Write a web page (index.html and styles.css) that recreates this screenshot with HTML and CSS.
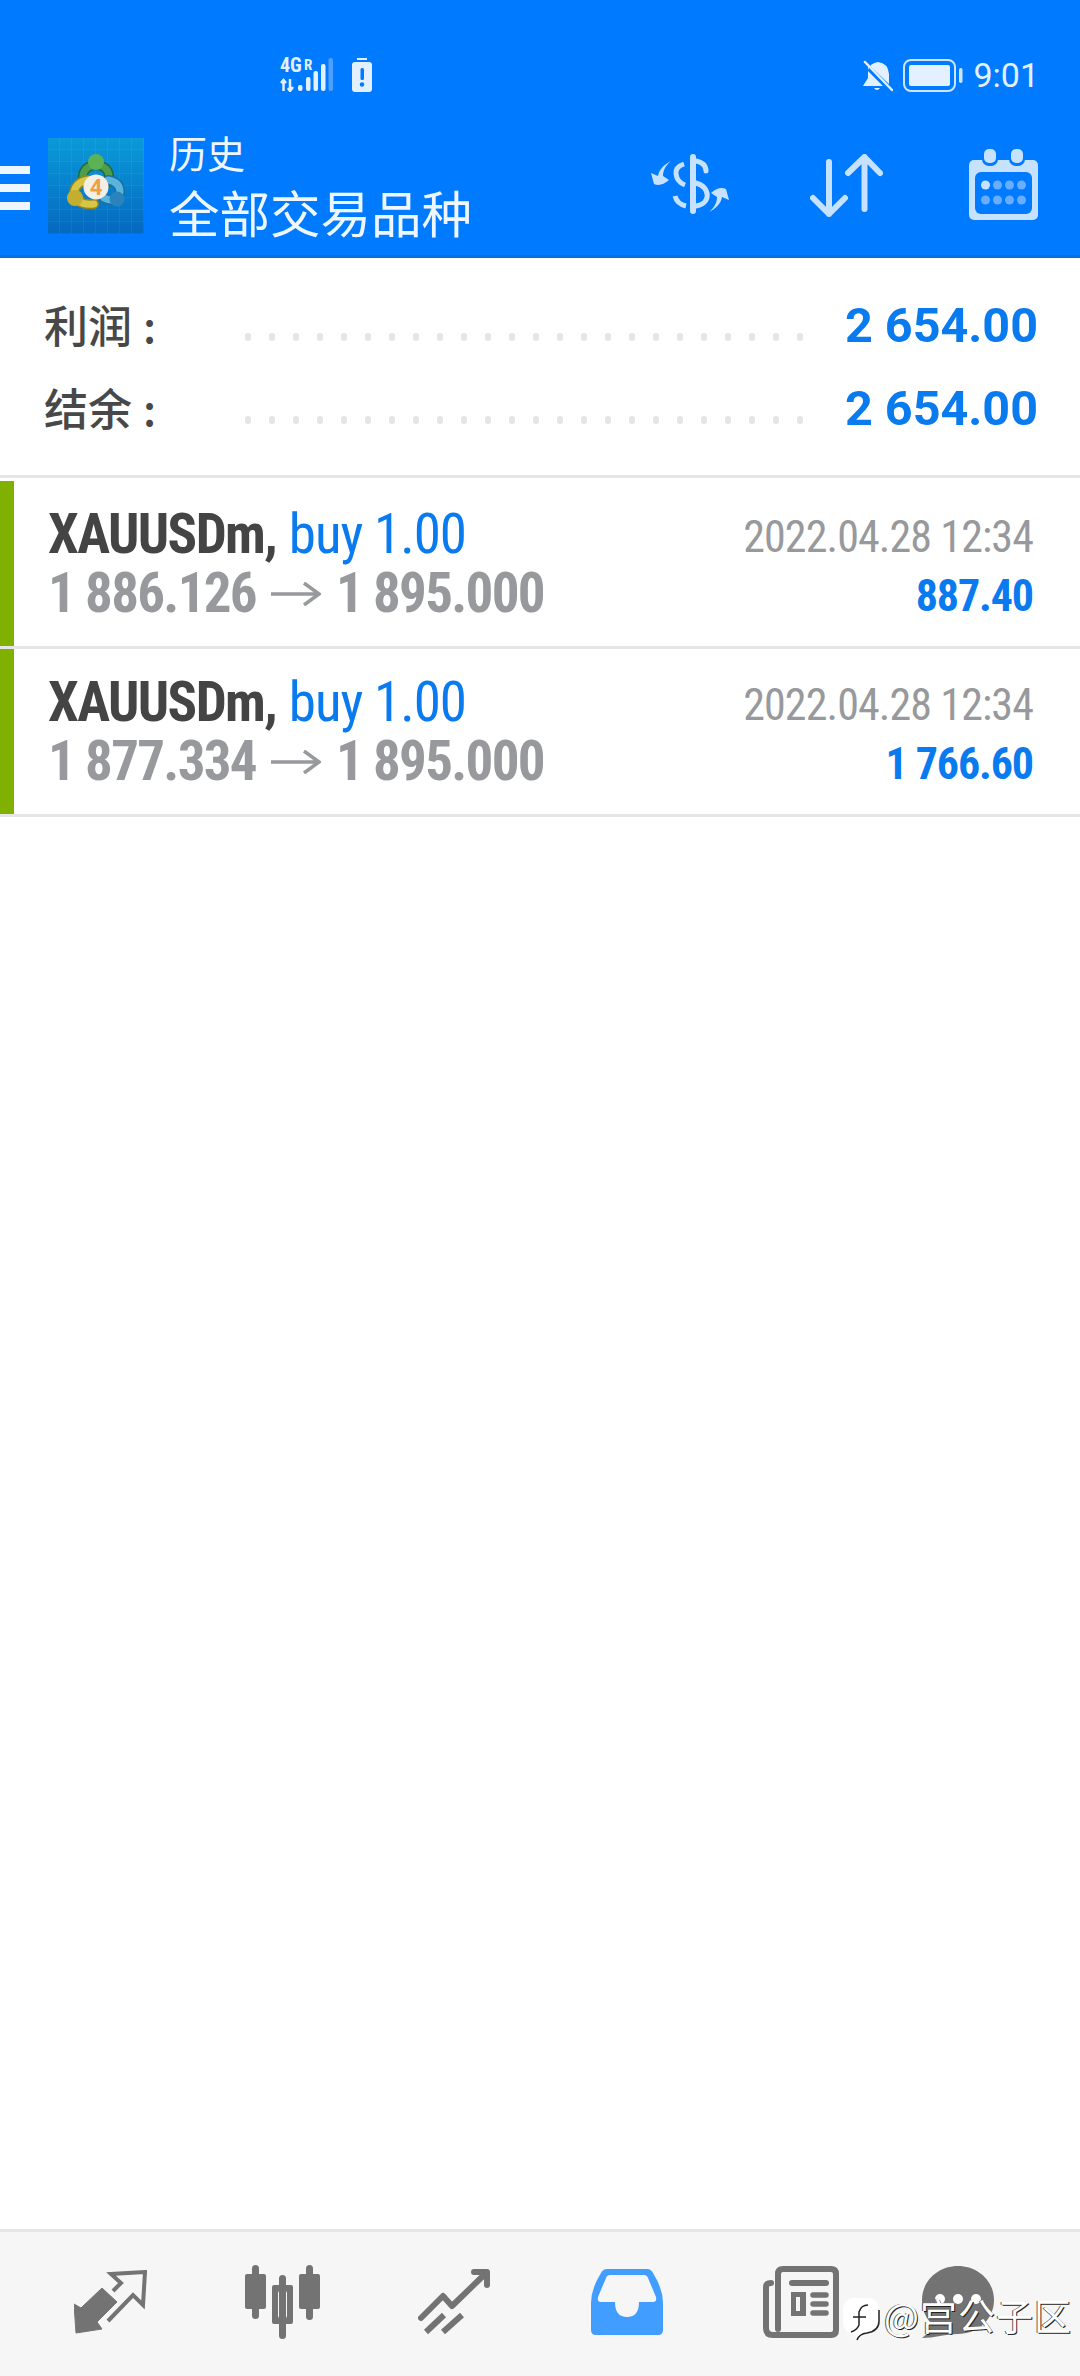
FILE: index.html
```html
<!DOCTYPE html>
<html lang="zh">

<head>
	<meta charset="UTF-8">
	<title>历史</title>
	<link rel="stylesheet" href="styles.css">
</head>

<body>
	<div class="phone">
		<header class="top">
			<div class="status">
				<div class="status-left">
					<svg class="net" width="53" height="40" viewBox="0 -6 53 40">
						<text x="0" y="14" class="net-big">4G</text>
						<text x="24" y="12" class="net-small">R</text>
						<path d="M3.500 33V22M1 25l2.500-3 2.500 3" class="net-arrow" />
						<path d="M10 21v12M8 30l2 3 3-4" class="net-arrow" />
						<rect x="18" y="27" width="4.500" height="6" rx="2" fill="#e3f0ff" />
						<rect x="26" y="19" width="4.500" height="14" rx="2" fill="#e3f0ff" />
						<rect x="33.500" y="13" width="4.500" height="20" rx="2" fill="#e3f0ff" />
						<rect x="41" y="6" width="4.500" height="27" rx="2" fill="#e3f0ff" />
						<rect x="48.500" y="0" width="4.500" height="33" rx="2" fill="#4f9fff" />
					</svg>
					<svg width="20" height="34" viewBox="0 0 20 34">
						<rect x="5" y="0" width="10" height="2" fill="#e3f0ff" />
						<rect x="0" y="4" width="20" height="30" rx="3" fill="#e3f0ff" />
						<rect x="8.500" y="10" width="3.500" height="12" rx="1.500" fill="#007aff" />
						<circle cx="10" cy="26.500" r="2.200" fill="#007aff" />
					</svg>
				</div>
				<div class="status-right">
					<svg width="30" height="32" viewBox="0 0 30 32">
						<path d="M5 10Q7 3 15 2Q25 3 26 14V24L5 4Z" fill="#e3f0ff" />
						<path d="M5 11V18L0 26H20L5 11Z" fill="#e3f0ff" />
						<path d="M11 28H17Q14 32 11 28Z" fill="#e3f0ff" />
						<path d="M2 2L29 30" stroke="#e3f0ff" stroke-width="2.500" stroke-linecap="round" />
					</svg>
					<svg width="60" height="33" viewBox="0 0 60 33">
						<rect x="1" y="1" width="51" height="31" rx="7" fill="none" stroke="#cfe5ff" stroke-width="2" />
						<rect x="6" y="6" width="41" height="21" rx="2" fill="#e3f0ff" />
						<rect x="56" y="9" width="3.500" height="15" rx="1.700" fill="#cfe5ff" />
					</svg>
					<span class="clock">9:01</span>
				</div>
			</div>
			<div class="toolbar">
				<div class="burger"><i></i><i></i><i></i></div>
				<svg class="logo" width="96" height="96" viewBox="0 0 96 96">
					<defs>
						<linearGradient id="logo-bg" x1="0" y1="0" x2="0" y2="1">
							<stop offset="0" stop-color="#0a9ad8" />
							<stop offset="1" stop-color="#0568bf" />
						</linearGradient>
						<pattern id="logo-grid" width="12" height="12" patternUnits="userSpaceOnUse">
							<path d="M12 0V12H0" fill="none" stroke="#ffffff" stroke-opacity="0.1" />
						</pattern>
					</defs>
					<rect width="96" height="96" fill="url(#logo-bg)" />
					<rect width="96" height="96" fill="url(#logo-grid)" />
					<g fill="none" stroke-linecap="round">
						<path d="M35 44Q33 28 48 27Q63 28 61 44" stroke="#1f6a3a" stroke-width="10" />
						<path d="M35 44Q33 28 48 27Q63 28 61 44" stroke="#4e9d4a" stroke-width="7" />
						<path d="M56 60Q68 66 72 54Q72 44 60 42" stroke="#1c6f9f" stroke-width="10" />
						<path d="M56 60Q68 66 72 54Q72 44 60 42" stroke="#58b3dd" stroke-width="7" />
						<path d="M46 66Q28 68 26 54Q28 44 40 42" stroke="#8f8420" stroke-width="10" />
						<path d="M46 66Q28 68 26 54Q28 44 40 42" stroke="#d9c544" stroke-width="7" />
					</g>
					<circle cx="48" cy="24" r="8" fill="#5cb257" />
					<circle cx="27" cy="60" r="8" fill="#c4ae30" />
					<circle cx="69" cy="61" r="7.500" fill="#2a84bb" />
					<circle cx="48" cy="49" r="12.500" fill="#f4efe6" />
					<text x="48" y="57" class="logo-four">4</text>
				</svg>
				<div class="titles">
					<div class="title-small">历史</div>
					<div class="title-big">全部交易品种</div>
				</div>
				<div class="tools">
					<svg width="79" height="64" viewBox="0 0 79 64">
						<g fill="none" stroke="#c6e2ff" stroke-width="5" stroke-linecap="round">
							<path d="M42 3V57" stroke-width="6" />
							<path d="M45 7Q55 9 55 17" />
							<path d="M45 29C60 33 60 50 45 52" />
							<path d="M33 10Q24 13 25 20Q26 28 34 31" stroke-linecap="butt" />
							<path d="M24 42Q26 50 35 52" stroke-linecap="butt" />
						</g>
						<g fill="#c6e2ff">
							<path d="M20 7C14 10 8 15 7 22L0 19L3 30Q10 33 18 26L12 22C12 16 15 11 20 7Z" />
							<path transform="rotate(180 39 32.500)" d="M20 7C14 10 8 15 7 22L0 19L3 30Q10 33 18 26L12 22C12 16 15 11 20 7Z" />
						</g>
					</svg>
					<svg width="73" height="63" viewBox="0 0 73 63">
						<g fill="none" stroke="#c6e2ff" stroke-width="6" stroke-linecap="round" stroke-linejoin="round">
							<path d="M19 8V60M3 44L19 60L35 44" />
							<path d="M54.500 55V3M38 19L54.500 3L70 19" />
						</g>
					</svg>
					<svg width="69" height="71" viewBox="0 0 69 71">
						<rect y="11" width="69" height="60" rx="5" fill="#c6e2ff" />
						<rect x="6" y="23" width="57" height="42" rx="6" fill="#007aff" />
						<rect x="13" y="-2" width="16" height="19" rx="7" fill="#007aff" />
						<rect x="40" y="-2" width="16" height="19" rx="7" fill="#007aff" />
						<rect x="15" y="0" width="12" height="14" rx="5" fill="#c6e2ff" />
						<rect x="42" y="0" width="12" height="14" rx="5" fill="#c6e2ff" />
						<circle cx="16.500" cy="36" r="4.500" fill="#c6e2ff" />
						<g fill="#69adff">
							<circle cx="28.500" cy="36" r="4.500" />
							<circle cx="40.500" cy="36" r="4.500" />
							<circle cx="52.500" cy="36" r="4.500" />
							<circle cx="16.500" cy="51" r="4.500" />
							<circle cx="28.500" cy="51" r="4.500" />
							<circle cx="40.500" cy="51" r="4.500" />
							<circle cx="52.500" cy="51" r="4.500" />
						</g>
					</svg>
				</div>
			</div>
		</header>

		<section class="summary">
			<div class="sum-row">
				<span class="sum-label">利润<b>:</b></span>
				<span class="dots"></span>
				<span class="sum-value">2 654.00</span>
			</div>
			<div class="sum-row">
				<span class="sum-label">结余<b>:</b></span>
				<span class="dots"></span>
				<span class="sum-value">2 654.00</span>
			</div>
		</section>

		<main class="deals">
			<article class="deal">
				<div class="deal-left">
					<div class="line"><b class="sym">XAUUSDm,</b> <span class="lot">buy 1.00</span></div>
					<div class="line prices">
						<span>1 886.126</span>
						<svg width="50" height="24" viewBox="0 0 50 24"><path d="M0 12H48M33 1L48 12L33 23" fill="none" stroke="#98999c" stroke-width="3.500" /></svg>
						<span>1 895.000</span>
					</div>
				</div>
				<div class="deal-right">
					<div class="date">2022.04.28 12:34</div>
					<div class="profit">887.40</div>
				</div>
			</article>
			<article class="deal">
				<div class="deal-left">
					<div class="line"><b class="sym">XAUUSDm,</b> <span class="lot">buy 1.00</span></div>
					<div class="line prices">
						<span>1 877.334</span>
						<svg width="50" height="24" viewBox="0 0 50 24"><path d="M0 12H48M33 1L48 12L33 23" fill="none" stroke="#98999c" stroke-width="3.500" /></svg>
						<span>1 895.000</span>
					</div>
				</div>
				<div class="deal-right">
					<div class="date">2022.04.28 12:34</div>
					<div class="profit">1 766.60</div>
				</div>
			</article>
		</main>

		<nav class="tabs">
			<div class="tab">
				<svg width="73" height="64" viewBox="0 0 73 64">
					<path d="M0 34L7 38L28 18L43 32L23 52L28 59L2 63Z" fill="#737373" stroke="#737373" stroke-linejoin="round" />
					<path d="M39 21L47 13L37 4L71 2L69 35L59 25L34 51" fill="none" stroke="#737373" stroke-width="4" />
				</svg>
			</div>
			<div class="tab">
				<svg width="75" height="74" viewBox="0 0 75 74">
					<g fill="#737373">
						<rect x="7" y="0" width="7" height="54" rx="3.500" />
						<rect x="0" y="9" width="21" height="35" rx="2" />
						<rect x="34" y="10" width="7" height="64" rx="3.500" />
						<path fill-rule="evenodd" d="M29 20H46Q48 20 48 22V57Q48 59 46 59H29Q27 59 27 57V22Q27 20 29 20ZM35 26Q33 26 33 28V51Q33 53 35 53H40Q42 53 42 51V28Q42 26 40 26Z" />
						<rect x="61" y="0" width="7" height="55" rx="3.500" />
						<rect x="54" y="9" width="21" height="35" rx="2" />
					</g>
				</svg>
			</div>
			<div class="tab">
				<svg width="72" height="66" viewBox="0 0 72 66">
					<g fill="none" stroke="#737373" stroke-width="6" stroke-linecap="round" stroke-linejoin="round">
						<path d="M3 49L25 27L34 37L66 6" />
						<path d="M56 3H69V16" />
						<path d="M8 63L26 46" stroke-linecap="butt" />
						<path d="M25 63L44 46" stroke-linecap="butt" />
					</g>
				</svg>
			</div>
			<div class="tab tab-inbox">
				<svg width="72" height="66" viewBox="0 0 72 66">
					<path d="M16 0H56Q60 0 62 4Q72 20 72 34V61Q72 66 67 66H5Q0 66 0 61V34Q0 20 10 4Q12 0 16 0Z" fill="#419dff" />
					<path d="M19 6H53Q56 6 57 9L65 28Q66 33 62 33H48Q48 48 36 48Q24 48 24 33H10Q6 33 7 28L15 9Q16 6 19 6Z" fill="#f6f6f6" />
				</svg>
			</div>
			<div class="tab tab-news">
				<svg width="76" height="72" viewBox="0 0 76 72">
					<g fill="none" stroke="#737373" stroke-linecap="round">
						<path d="M15 63V8Q15 3 20 3H68Q73 3 73 8V64Q73 69 68 69H10Q3 69 3 62V21Q3 17 8 17" stroke-width="6" />
						<path d="M29 17H63" stroke-width="6" />
						<path d="M50 29H63M50 38H63M50 47H63" stroke-width="5.500" />
					</g>
					<path fill="#737373" fill-rule="evenodd" d="M28 26H43V50H28ZM33 31V45H37V31Z" />
				</svg>
			</div>
			<div class="tab tab-chat">
				<svg width="72" height="72" viewBox="0 0 72 72">
					<path d="M36 0C56 0 72 15 72 34C72 54 55 68 36 68C24 68 12 72 0 72C6 68 9 62 8 56C3 50 0 43 0 34C0 15 16 0 36 0Z" fill="#737373" />
					<circle cx="18" cy="33" r="5" fill="#ffffff" />
					<circle cx="36" cy="33" r="5" fill="#ffffff" />
					<circle cx="54" cy="33" r="5" fill="#ffffff" />
				</svg>
			</div>
		</nav>

		<div class="watermark">
			<svg width="37" height="44" viewBox="0 0 37 44">
				<path d="M10 1H27Q36 2 36 13V24Q36 34 24 36Q16 37 14 43L11 37Q1 36 0 26V11Q1 2 10 1Z" fill="#ffffff" />
				<path d="M36 13V24Q36 34 24 36Q16 37 14 43" fill="none" stroke="#222222" stroke-width="1.500" />
				<path d="M25 8Q18 8 16 15V28Q14 33 8 35M10 20H23" fill="none" stroke="#222222" stroke-width="1.500" />
			</svg>
			<span>@宫公子区</span>
		</div>
	</div>
</body>

</html>
```

FILE: styles.css
```css
* {
	box-sizing: border-box;
}

body {
	margin: 0;
	background-color: white;
	font-family: Roboto, "Noto Sans CJK SC", sans-serif;
}

svg {
	display: block;
	flex: none;
}

.phone {
	position: relative;
	width: 1080px;
	height: 2376px;
	display: flex;
	flex-direction: column;
	overflow: hidden;
}

/* blue top part */
.top {
	height: 258px;
	background-color: #007aff;
	border-bottom: 3px solid #0a6fd8;
	color: #eef6ff;
}

.status {
	height: 120px;
	padding: 58px 41px 0 280px;
	display: flex;
	justify-content: space-between;
	align-items: flex-start;
}

.status-left {
	display: flex;
	gap: 19px;
}

.net {
	margin-top: -6px;
}

.status-right {
	display: flex;
	align-items: center;
	gap: 10px;
	margin-top: 1px;
}

.clock {
	font-size: 34px;
	color: #e3f0ff;
	line-height: 33px;
}

.net-big {
	font: 700 20px Roboto, sans-serif;
	font-stretch: 75%;
	fill: #e3f0ff;
}

.net-small {
	font: 700 15px Roboto, sans-serif;
	font-stretch: 75%;
	fill: #e3f0ff;
}

.net-arrow {
	fill: none;
	stroke: #e3f0ff;
	stroke-width: 2.5;
}

.toolbar {
	height: 135px;
	display: flex;
	align-items: flex-start;
}

.burger {
	width: 30px;
	margin-top: 46px;
	display: flex;
	flex-direction: column;
	gap: 10px;
}

.burger i {
	display: block;
	height: 8px;
	background-color: #eef6ff;
}

.logo {
	margin: 18px 0 0 18px;
}

.titles {
	margin-left: 25px;
	width: 401px;
	font-family: "Noto Sans CJK SC", sans-serif;
}

.title-small {
	font-size: 38px;
	line-height: 52px;
	margin-top: 6px;
}

.title-big {
	font-size: 50.5px;
	line-height: 66px;
}

.tools {
	flex: 1;
	display: flex;
	align-items: flex-start;
	padding-top: 28px;
}

.tools svg:nth-child(1) {
	margin: 6px 0 0 81px;
}

.tools svg:nth-child(2) {
	margin: 6px 0 0 80px;
}

.tools svg:nth-child(3) {
	margin: 1px 0 0 86px;
}

/* summary */
.summary {
	padding: 26px 42px 25px 44px;
	border-bottom: 3px solid #e6e6e6;
	height: 220px;
}

.sum-row {
	display: flex;
	height: 83px;
	line-height: 83px;
}

.sum-label {
	width: 192px;
	font-size: 44px;
	font-weight: 500;
	line-height: 80px;
	color: #484848;
	font-family: "Noto Sans CJK SC", sans-serif;
}

.sum-label b {
	font-weight: 500;
	margin-left: 11px;
}

.dots {
	width: 576px;
	height: 8px;
	align-self: flex-end;
	margin-bottom: 26px;
	background: radial-gradient(ellipse 3.5px 4px at center, #e6e6e6 95%, transparent) repeat-x;
	background-size: 24px 8px;
}

.sum-value {
	flex: 1;
	text-align: right;
	font-size: 48.5px;
	font-weight: 700;
	color: #0a7aef;
	white-space: nowrap;
}

/* deals */
.deals {
	flex: 1;
	padding-top: 3px;
}

.deal {
	height: 168px;
	border-bottom: 3px solid #e6e6e6;
	display: flex;
	font-stretch: 75%;
}

/* green buy stripe */
.deal::before {
	content: "";
	width: 14px;
	background-color: #80b000;
}

.deal-left {
	margin-left: 34px;
	padding-top: 24px;
}

.line {
	height: 59px;
	line-height: 59px;
	font-size: 55px;
	white-space: nowrap;
}

.sym {
	color: #444444;
	font-weight: 700;
	letter-spacing: -1.6px;
}

.lot {
	color: #0a7aef;
	font-weight: 400;
	letter-spacing: -1px;
}

.prices {
	display: flex;
	align-items: center;
	gap: 15px;
	color: #98999c;
	font-weight: 700;
	letter-spacing: -1.7px;
}

.deal-right {
	margin: 0 47px 0 auto;
	text-align: right;
	padding-top: 27px;
	font-size: 44px;
	line-height: 59px;
}

.date {
	color: #98999c;
	letter-spacing: -0.9px;
}

.profit {
	color: #0a7aef;
	font-weight: 700;
	letter-spacing: -1.1px;
}

/* bottom tabs */
.tabs {
	height: 147px;
	background-color: #f6f6f6;
	border-top: 3px solid #e6e6e6;
	padding: 33px 24px 0;
	display: grid;
	grid-template-columns: repeat(6, 172px);
}

.tab {
	display: flex;
	justify-content: center;
	height: 74px;
	align-items: center;
}

.tab-inbox {
	padding-left: 2px;
}

.tab-news {
	padding-left: 6px;
}

.tab-chat {
	padding-right: 24px;
}

/* watermark over the tabs */
.watermark {
	position: absolute;
	left: 843px;
	top: 2297px;
	display: flex;
	align-items: flex-start;
	gap: 4px;
	color: white;
	font-size: 37px;
	line-height: 36px;
	letter-spacing: 1px;
	font-family: "Noto Sans CJK SC", sans-serif;
	text-shadow: 1px 1px 0 #222222, -1px 0 0 #555555;
	white-space: nowrap;
}

.logo-four {
	font: 700 22px Roboto, sans-serif;
	fill: #f0a040;
	text-anchor: middle;
}
```
